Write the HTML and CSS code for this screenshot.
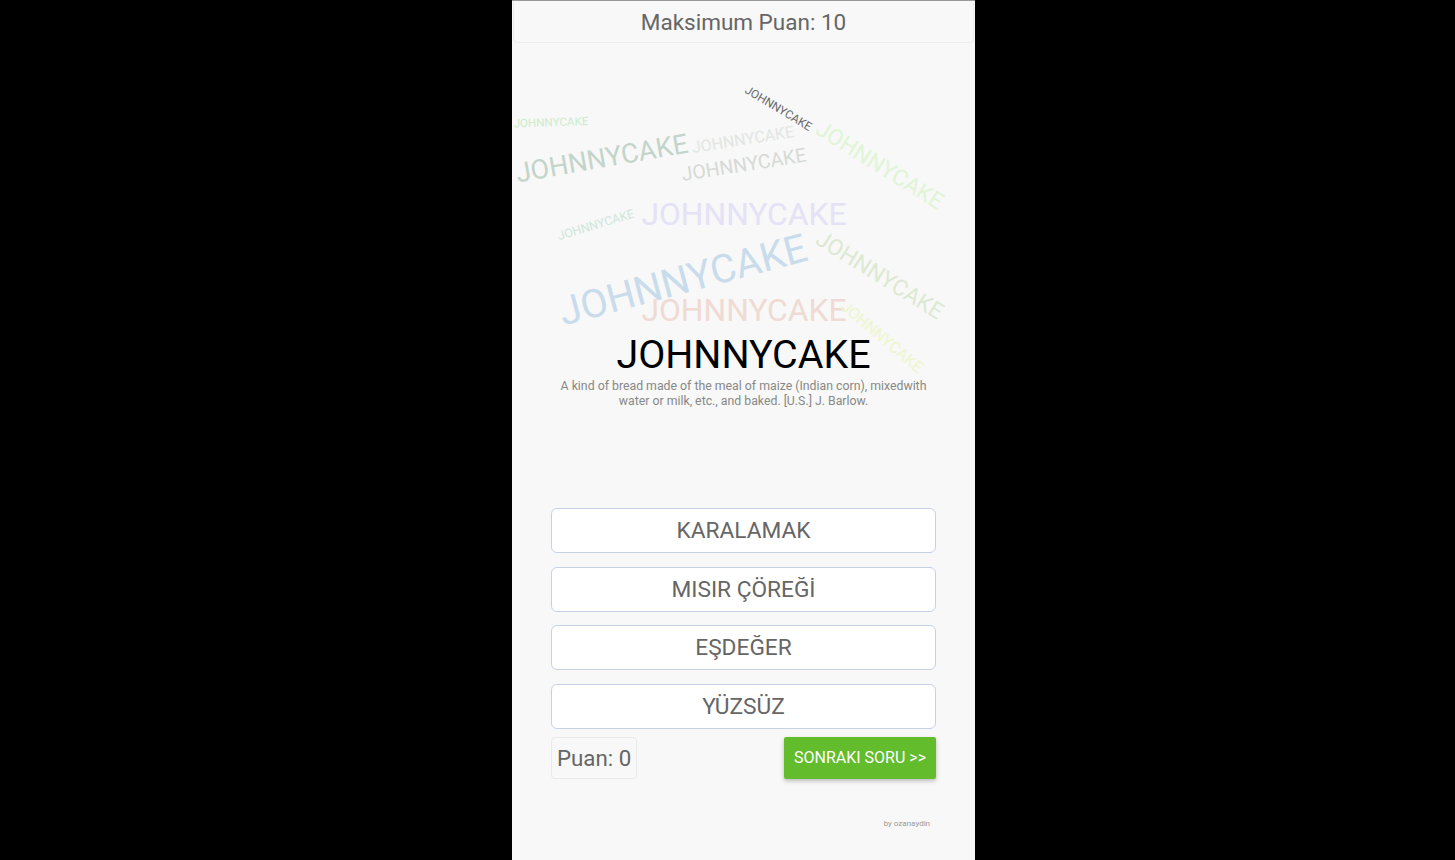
FILE: index.html
```html
<!DOCTYPE html>
<html lang="tr">
<head>
<meta charset="utf-8">
<title>Kelime Oyunu</title>
<link rel="stylesheet" href="styles.css">
</head>
<body>
<div class="app">
  <header class="score-header">Maksimum Puan: 10</header>
  <section class="stage">
    <span class="cloud w1">JOHNNYCAKE</span>
    <span class="cloud w2">JOHNNYCAKE</span>
    <span class="cloud w3">JOHNNYCAKE</span>
    <span class="cloud w4">JOHNNYCAKE</span>
    <span class="cloud w5">JOHNNYCAKE</span>
    <span class="cloud w6">JOHNNYCAKE</span>
    <span class="cloud w7">JOHNNYCAKE</span>
    <span class="cloud w8">JOHNNYCAKE</span>
    <span class="cloud w9">JOHNNYCAKE</span>
    <span class="cloud w10">JOHNNYCAKE</span>
    <span class="cloud w11">JOHNNYCAKE</span>
    <span class="cloud w12">JOHNNYCAKE</span>
    <h1 class="word">JOHNNYCAKE</h1>
    <p class="definition">A kind of bread made of the meal of maize (Indian corn), mixedwith water or milk, etc., and baked. [U.S.] J. Barlow.</p>
  </section>
  <section class="options">
    <button class="option">KARALAMAK</button>
    <button class="option">MISIR ÇÖREĞİ</button>
    <button class="option">EŞDEĞER</button>
    <button class="option">YÜZSÜZ</button>
  </section>
  <div class="actions">
    <div class="points">Puan: 0</div>
    <button class="next">SONRAKI SORU &gt;&gt;</button>
  </div>
  <footer class="credit">by ozanaydin</footer>
</div>
</body>
</html>
```

FILE: styles.css
```css
* { box-sizing: border-box; }
html, body { margin: 0; padding: 0; }
body {
  background: #000;
  font-family: Roboto, "Noto Sans", "Liberation Sans", sans-serif;
  padding-left: 512px;
}
.app {
  width: 463px;
  height: 860px;
  background: #f7f8f7;
  border-top: 1px solid #9a9a9a;
  display: flex;
  flex-direction: column;
}
.score-header {
  margin: 0 1px;
  height: 42px;
  border: 1px solid #ecedec;
  border-top: none;
  border-radius: 0 0 4px 4px;
  background: #f7f8f7;
  color: #666;
  font-size: 22.5px;
  text-align: center;
  line-height: 42px;
}
.stage {
  position: relative;
  height: 366px;
  display: flex;
  flex-direction: column;
  justify-content: flex-end;
  align-items: center;
}
.cloud {
  position: absolute;
  white-space: nowrap;
  line-height: 1;
  transform: translate(-50%, -50%) rotate(var(--r));
}
/* centers relative to stage (stage origin: x=512, y=44) */
.w1  { left: 266px; top: 66px;  font-size: 11.7px; --r: 31deg;  color: #6a6a6a; }
.w2  { left: 39px;  top: 80px;  font-size: 11.6px; --r: -2deg;  color: #cdebcd; }
.w3  { left: 90px;  top: 116px; font-size: 27px;   --r: -10deg; color: #c3d4cb; }
.w4  { left: 231px; top: 97px;  font-size: 16px;   --r: -9deg;  color: #e3e5e3; }
.w5  { left: 232px; top: 122px; font-size: 19.5px; --r: -9deg;  color: #d6d9d6; }
.w6  { left: 368px; top: 122px; font-size: 22.5px; --r: 32deg;  color: #e0f5d6; }
.w7  { left: 84px;  top: 182px; font-size: 12.3px; --r: -17deg; color: #cfe6dc; }
.w8  { left: 232px; top: 172px; font-size: 31.8px; --r: 0deg;   color: #e5e1f6; }
.w9  { left: 171px; top: 237px; font-size: 39.5px; --r: -15deg; color: #c9dcec; }
.w10 { left: 368px; top: 232px; font-size: 22.5px; --r: 32deg;  color: #dde9d2; }
.w11 { left: 232px; top: 268px; font-size: 31.8px; --r: 0deg;   color: #f0dbd4; }
.w12 { left: 370px; top: 294px; font-size: 15.7px; --r: 40deg;  color: #eef6cc; }
.word {
  position: relative;
  margin: 0 0 3px;
  font-weight: 400;
  font-size: 39.4px;
  line-height: 42px;
  color: #000;
}
.definition {
  position: relative;
  margin: 0;
  width: 390px;
  text-align: center;
  font-size: 12.3px;
  line-height: 15px;
  color: #888;
}
.options {
  margin-top: 99px;
  padding: 0 39px;
  display: flex;
  flex-direction: column;
  gap: 13.5px;
}
.option {
  height: 45px;
  background: #fff;
  border: 1px solid #c6d2e3;
  border-radius: 6px;
  font-family: inherit;
  font-size: 22.7px;
  color: #666;
  padding: 0;
}
.actions {
  margin-top: 8px;
  padding: 0 39px;
  display: flex;
  justify-content: space-between;
  align-items: flex-start;
}
.points {
  height: 42px;
  padding: 0 5px;
  border: 1px solid #e9eae9;
  border-radius: 4px;
  font-size: 22.3px;
  line-height: 40px;
  color: #666;
}
.next {
  width: 152px;
  height: 42px;
  border: none;
  border-radius: 2px;
  background: #62bc2b;
  color: #fff;
  font-family: inherit;
  font-size: 16px;
  padding: 0;
  box-shadow: 0 2px 4px rgba(0,0,0,0.25);
}
.credit {
  margin-top: 40px;
  padding-right: 45px;
  text-align: right;
  font-size: 8px;
  color: #999;
}
```
